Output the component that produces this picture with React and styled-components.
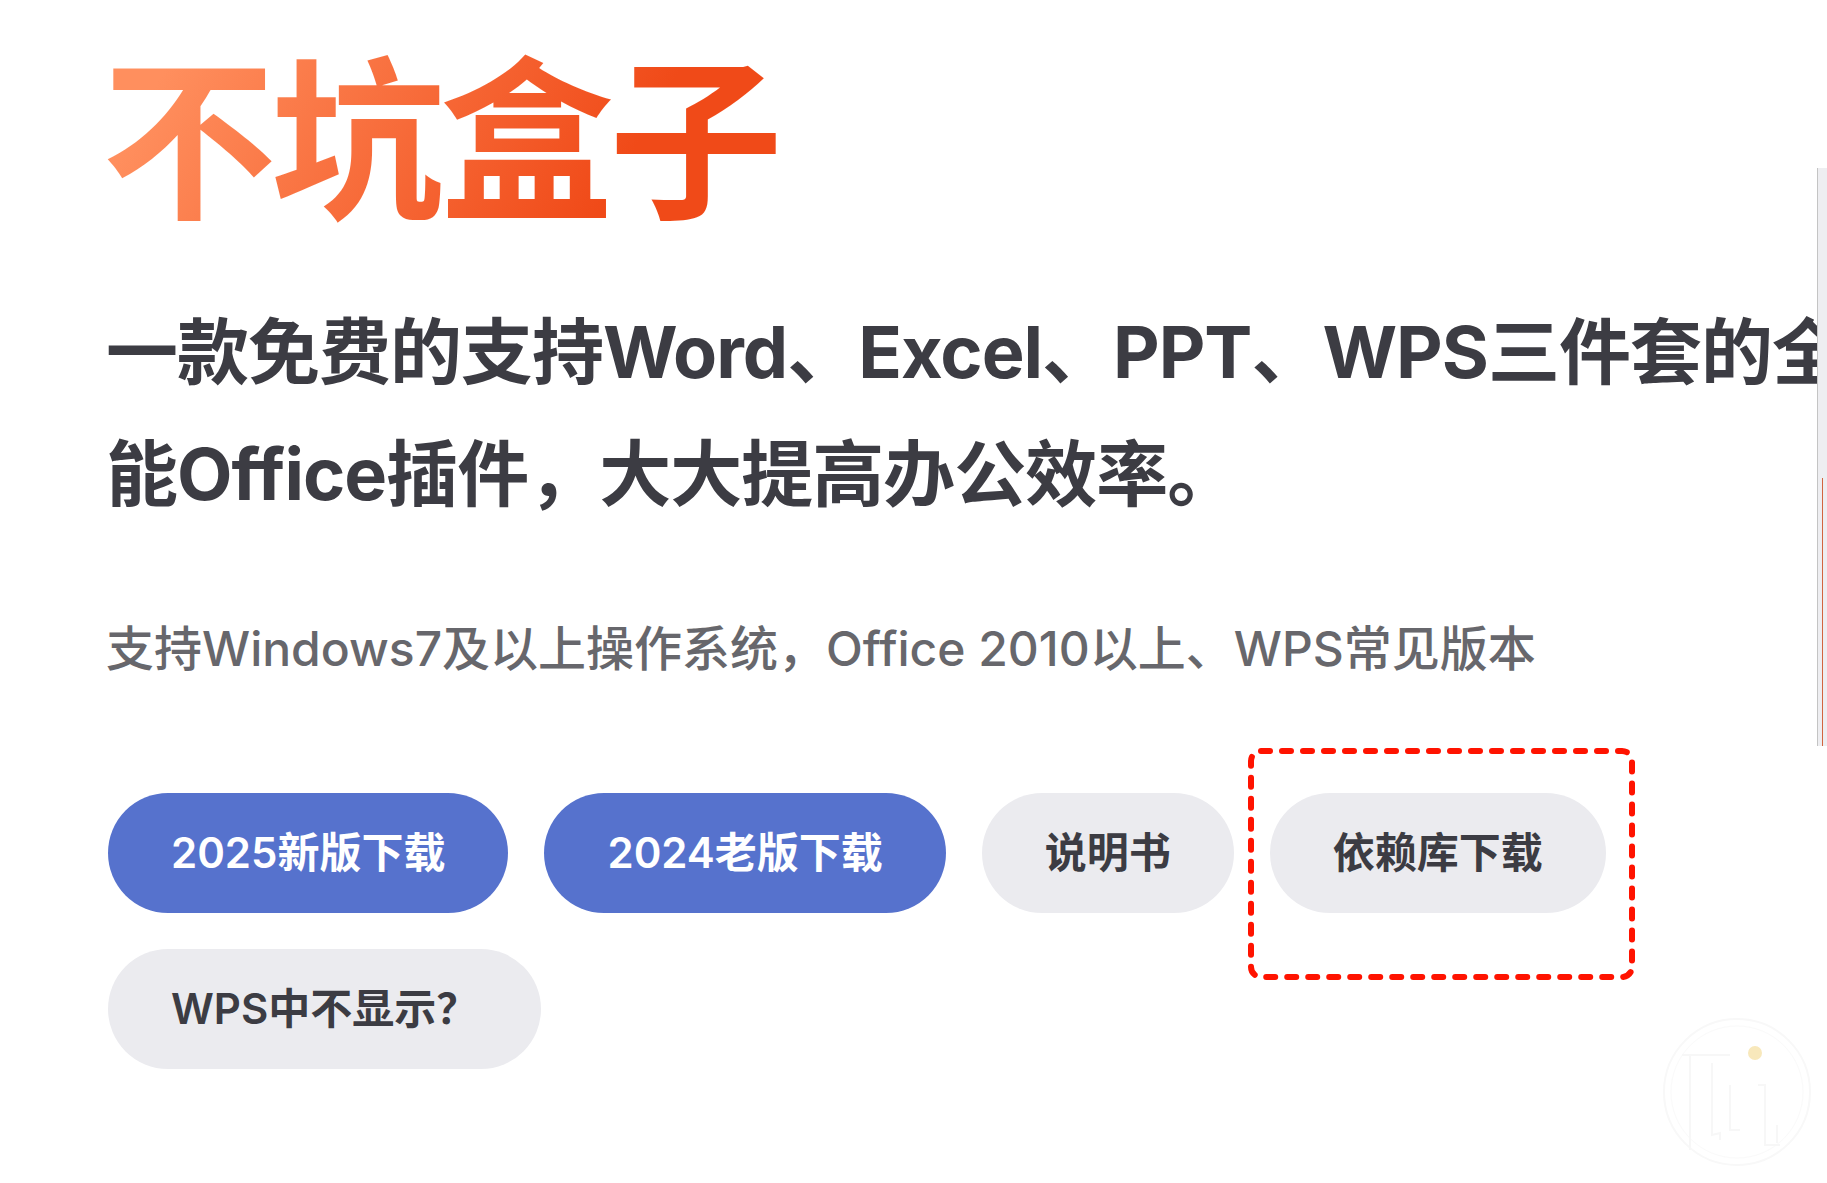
import React from "react"
import styled, { createGlobalStyle } from "styled-components"

const GlobalStyle = createGlobalStyle`
  html, body {
    margin: 0;
    padding: 0;
    background: #ffffff;
    overflow: hidden;
  }
  body {
    font-family: Inter, "Noto Sans CJK SC", "Noto Sans", sans-serif;
    -webkit-font-smoothing: antialiased;
  }
`

const Page = styled.div`
  position: relative;
  width: 1827px;
  height: 1183px;
  overflow: hidden;
`

const Hero = styled.section`
  width: 1760px;
  padding: 41px 0 0 106px;
`

// big gradient product name
const Name = styled.h1`
  margin: 0 0 0 -4px;
  font-size: 174px;
  line-height: 202px;
  font-weight: 700;
  letter-spacing: -5px;
  white-space: nowrap;
  background: linear-gradient(120deg, #ff8f5e 10%, #f04a18 75%);
  -webkit-background-clip: text;
  background-clip: text;
  color: transparent;
  display: inline-block;
`

const Text = styled.p`
  margin: 48px 0 0;
  font-size: 72px;
  line-height: 122px;
  font-weight: 700;
  letter-spacing: -1px;
  color: #3c3c43;
  white-space: nowrap;
`

const Tagline = styled.p`
  margin: 78px 0 0;
  font-size: 48px;
  line-height: 72px;
  font-weight: 500;
  color: #67676c;
  white-space: nowrap;
`

const Actions = styled.div`
  display: flex;
  flex-wrap: wrap;
  gap: 36px;
  margin: 108px 0 0 2px;
  width: 1700px;
`

const Button = styled.a`
  display: inline-block;
  box-sizing: border-box;
  border: 3px solid transparent;
  border-radius: 60px;
  padding: 0 60px;
  line-height: 114px;
  font-size: 42px;
  font-weight: 600;
  white-space: nowrap;
  text-decoration: none;
  background: ${p => (p.$brand ? "#5672cd" : "#ebebef")};
  color: ${p => (p.$brand ? "#ffffff" : "#3c3c43")};
`

const Mark = styled.svg`
  position: absolute;
  left: 1246px;
  top: 746px;
  overflow: visible;
`

const EdgePanel = styled.div`
  position: absolute;
  left: 1817px;
  top: 168px;
  width: 10px;
  height: 578px;
  background: #eeeef1;
  border-left: 1px solid #c4c4c4;
  box-sizing: border-box;
`

const EdgeAccent = styled.div`
  position: absolute;
  left: 4px;
  top: 310px;
  bottom: 0;
  width: 1px;
  background: #d2653f;
`

const Watermark = styled.svg`
  position: absolute;
  left: 1660px;
  top: 1015px;
`

export default function App() {
  return (
    <Page>
      <GlobalStyle />
      <Hero>
        <Name>不坑盒子</Name>
        <Text>
          一款免费的支持Word、Excel、PPT、WPS三件套的全
          <br />
          能Office插件，大大提高办公效率。
        </Text>
        <Tagline>支持Windows7及以上操作系统，Office 2010以上、WPS常见版本</Tagline>
        <Actions>
          <Button $brand>2025新版下载</Button>
          <Button $brand>2024老版下载</Button>
          <Button>说明书</Button>
          <Button>依赖库下载</Button>
          <Button>WPS中不显示？</Button>
        </Actions>
      </Hero>

      <Mark width="391" height="236" viewBox="0 0 391 236">
        <rect
          x="5"
          y="5"
          width="381"
          height="226"
          rx="10"
          fill="none"
          stroke="#ff1300"
          strokeWidth="6"
          strokeDasharray="9 12"
          strokeLinecap="round"
        />
      </Mark>

      <EdgePanel>
        <EdgeAccent />
      </EdgePanel>

      <Watermark width="160" height="160" viewBox="0 0 160 160">
        <circle cx="77" cy="77" r="73" fill="none" stroke="#f8f8f8" strokeWidth="2" />
        <circle cx="77" cy="77" r="66" fill="none" stroke="#fafafa" strokeWidth="1" />
        <path d="M22 40 H70 M30 40 V135 M52 48 V120 L60 118 V125 M70 70 V115 H80 M98 70 H105 V130 H120 M117 110 V128" fill="none" stroke="#f7f7f7" strokeWidth="2" />
        <circle cx="95" cy="38" r="7" fill="#f8e8bb" />
      </Watermark>
    </Page>
  )
}
